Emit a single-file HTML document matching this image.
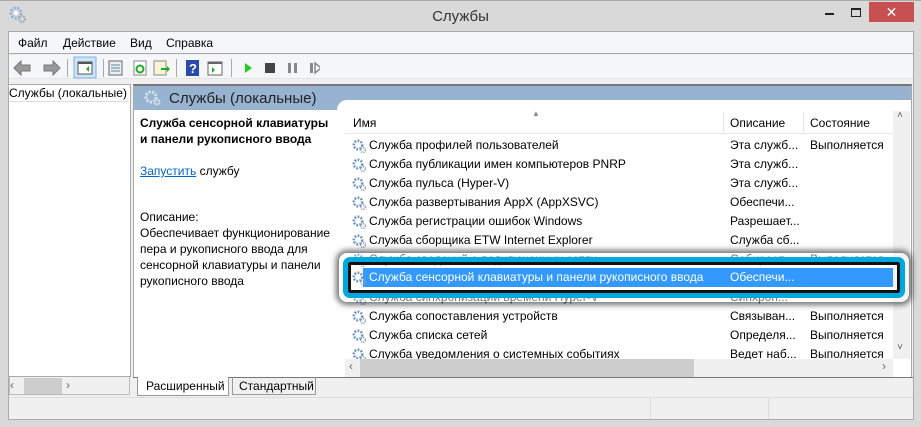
<!DOCTYPE html>
<html><head><meta charset="utf-8"><style>
*{margin:0;padding:0;box-sizing:border-box}
body{width:921px;height:427px;overflow:hidden;background:#d9d9d9;font-family:"Liberation Sans","DejaVu Sans",sans-serif;font-size:12px;color:#000;position:relative}
.a{position:absolute}
.row{position:absolute;left:350px;height:19px;line-height:19px;white-space:nowrap;width:540px}
.row .n{position:absolute;left:19px}
.row .d{position:absolute;left:380px}
.row .s{position:absolute;left:460px}
.g{position:absolute;left:2px;top:3px;width:14px;height:14px}
</style></head><body>
<div class="a" style="left:0;top:0;width:921px;height:1px;background:#aaa"></div>
<svg class="a" style="left:9px;top:6px" width="18" height="18" viewBox="0 0 18 18"><circle cx="7" cy="7" r="5" fill="none" stroke="#8fb0d0" stroke-width="3" stroke-dasharray="2 1.5"/><circle cx="7" cy="7" r="2" fill="#fff"/><circle cx="13" cy="13" r="3" fill="none" stroke="#9ab" stroke-width="2" stroke-dasharray="1.5 1"/></svg>
<div class="a" style="left:0;width:921px;top:8px;text-align:center;font-size:15px;color:#333">Службы</div>
<div class="a" style="left:825px;top:13px;width:9px;height:2px;background:#222"></div>
<div class="a" style="left:851px;top:8px;width:10px;height:9px;border:1px solid #222;border-top-width:2px"></div>
<div class="a" style="left:869px;top:2px;width:45px;height:20px;background:#c75050;color:#fff;text-align:center;font-size:14px;line-height:20px;font-weight:bold">✕</div>
<div class="a" style="left:8px;top:31px;width:906px;height:389px;background:#f0f0f0;border:1px solid #aaa"></div>
<div class="a" style="left:9px;top:32px;width:904px;height:22px;background:#f5f6f7;border-bottom:1px solid #aaa"></div>
<div class="a" style="top:36px;left:18px;font-size:12px">Файл</div>
<div class="a" style="top:36px;left:63px">Действие</div>
<div class="a" style="top:36px;left:130px">Вид</div>
<div class="a" style="top:36px;left:166px">Справка</div>
<div class="a" style="left:9px;top:55px;width:904px;height:24px;background:#f5f6f7;border-bottom:1px solid #e3e3e3"></div>
<svg class="a" style="left:10px;top:56px" width="310" height="24">
<path d="M4 12 L11 5 V9 H20 V15 H11 V19 Z" fill="#999" stroke="#777"/>
<path d="M50 12 L43 5 V9 H34 V15 H43 V19 Z" fill="#999" stroke="#777"/>
<rect x="57" y="3" width="1" height="18" fill="#aaa"/>
<rect x="64" y="1" width="22" height="21" fill="#cce4f7" stroke="#7eb4ea"/>
<rect x="68" y="6" width="14" height="12" fill="#fff" stroke="#555"/><rect x="68" y="6" width="14" height="2" fill="#555"/><path d="M79 10 l-3 3 3 3z" fill="#2a2"/>
<rect x="93" y="3" width="1" height="18" fill="#aaa"/>
<rect x="99" y="5" width="13" height="14" fill="#eee" stroke="#666"/><path d="M101 9h9M101 12h9M101 15h9" stroke="#58a"/>
<rect x="124" y="5" width="12" height="14" fill="#fff" stroke="#888"/><circle cx="130" cy="13" r="3.5" fill="none" stroke="#2a2" stroke-width="2"/>
<rect x="144" y="5" width="12" height="14" fill="#fbf3d5" stroke="#888"/><path d="M151 12h6v-2l3 3-3 3v-2h-6z" fill="#2a2"/>
<rect x="166" y="3" width="1" height="18" fill="#aaa"/>
<rect x="176" y="4" width="13" height="16" fill="#2b4ba8"/><text x="179" y="17" fill="#fff" font-size="13" font-weight="bold" font-family="Liberation Sans">?</text>
<rect x="198" y="6" width="14" height="13" fill="#fff" stroke="#666"/><rect x="198" y="6" width="14" height="2" fill="#666"/><path d="M202 11l3 3-3 3z" fill="#2a2"/>
<rect x="221" y="3" width="1" height="18" fill="#aaa"/>
<path d="M235 7 L242 12 L235 17Z" fill="#2c2"/>
<rect x="255" y="7" width="10" height="10" fill="#444"/>
<rect x="278" y="7" width="3" height="10" fill="#888"/><rect x="284" y="7" width="3" height="10" fill="#888"/>
<rect x="300" y="7" width="3" height="10" fill="#888"/><path d="M305 7 L311 12 L305 17Z" fill="none" stroke="#888" stroke-width="1.5"/>
</svg>
<div class="a" style="left:8px;top:84px;width:123px;height:293px;background:#fff;border:1px solid #aaa"></div>
<div class="a" style="left:9px;top:86px;width:120px;height:16px;border-bottom:1px solid #ddd;font-size:12px;white-space:nowrap">Службы (локальные)</div>
<div class="a" style="left:9px;top:377px;width:121px;height:18px;background:#f0f0f0;border:1px solid #bbb;border-top:0"></div>
<div class="a" style="left:24px;top:378px;width:38px;height:16px;background:#cdcdcd"></div>
<div class="a" style="left:10px;top:378px;color:#666">‹</div><div class="a" style="left:66px;top:378px;color:#666">›</div>
<div class="a" style="left:133px;top:84px;width:779px;height:294px;background:#fff;border:1px solid #aaa;border-top:2px solid #777"></div>
<div class="a" style="left:134px;top:86px;width:777px;height:24px;background:#98b3d0"></div>
<svg class="a" style="left:144px;top:89px" width="18" height="18"><circle cx="7" cy="8" r="5" fill="none" stroke="#d8e6f4" stroke-width="3" stroke-dasharray="2 1.5"/><circle cx="13" cy="13" r="2.5" fill="none" stroke="#c8d6e4" stroke-width="2"/></svg>
<div class="a" style="left:169px;top:90px;font-size:15px;color:#222">Службы (локальные)</div>
<div class="a" style="left:337px;top:100px;width:574px;height:14px;background:#fff;border-radius:10px 0 0 0"></div>
<div class="a" style="left:140px;top:115px;width:195px;font-weight:bold;line-height:16px">Служба сенсорной клавиатуры и панели рукописного ввода</div>
<div class="a" style="left:140px;top:164px"><span style="color:#0066cc;text-decoration:underline">Запустить</span> службу</div>
<div class="a" style="left:140px;top:209px;width:200px;line-height:16px">Описание:<br>Обеспечивает функционирование пера и рукописного ввода для сенсорной клавиатуры и панели рукописного ввода</div>
<div class="a" style="left:345px;top:110px;width:548px;height:24px;border-bottom:1px solid #e5e5e5"></div>
<div class="a" style="left:723px;top:112px;width:1px;height:22px;background:#e5e5e5"></div>
<div class="a" style="left:803px;top:112px;width:1px;height:22px;background:#e5e5e5"></div>
<div class="a" style="left:532px;top:109px;font-size:8px;color:#888">▲</div>
<div class="a" style="left:353px;top:116px">Имя</div>
<div class="a" style="left:730px;top:116px">Описание</div>
<div class="a" style="left:810px;top:116px">Состояние</div>
<div class="a" style="left:893px;top:111px;width:17px;height:248px;background:#f0f0f0"></div>
<div class="a" style="left:897px;top:110px;font-size:10px;color:#555">˄</div>
<div class="a" style="left:897px;top:342px;font-size:10px;color:#555">˅</div>
<div class="row" style="top:136px"><svg class="g"><use href="#gear"/></svg><span class="n">Служба профилей пользователей</span><span class="d">Эта служб...</span><span class="s">Выполняется</span></div>
<div class="row" style="top:155px"><svg class="g"><use href="#gear"/></svg><span class="n">Служба публикации имен компьютеров PNRP</span><span class="d">Эта служб...</span></div>
<div class="row" style="top:174px"><svg class="g"><use href="#gear"/></svg><span class="n">Служба пульса (Hyper-V)</span><span class="d">Эта служб...</span></div>
<div class="row" style="top:193px"><svg class="g"><use href="#gear"/></svg><span class="n">Служба развертывания AppX (AppXSVC)</span><span class="d">Обеспечи...</span></div>
<div class="row" style="top:212px"><svg class="g"><use href="#gear"/></svg><span class="n">Служба регистрации ошибок Windows</span><span class="d">Разрешает...</span></div>
<div class="row" style="top:231px"><svg class="g"><use href="#gear"/></svg><span class="n">Служба сборщика ETW Internet Explorer</span><span class="d">Служба сб...</span></div>
<div class="row" style="top:250px;color:#444"><svg class="g"><use href="#gear"/></svg><span class="n">Служба сведений о подключенных сетях</span><span class="d">Собирает...</span><span class="s">Выполняется</span></div>
<div class="row" style="top:288px;color:#444"><svg class="g"><use href="#gear"/></svg><span class="n">Служба синхронизации времени Hyper-V</span><span class="d">Синхрон...</span></div>
<div class="row" style="top:307px"><svg class="g"><use href="#gear"/></svg><span class="n">Служба сопоставления устройств</span><span class="d">Связыван...</span><span class="s">Выполняется</span></div>
<div class="row" style="top:326px"><svg class="g"><use href="#gear"/></svg><span class="n">Служба списка сетей</span><span class="d">Определя...</span><span class="s">Выполняется</span></div>
<div class="row" style="top:345px;height:14px;overflow:hidden"><svg class="g"><use href="#gear"/></svg><span class="n">Служба уведомления о системных событиях</span><span class="d">Ведет наб...</span><span class="s">Выполняется</span></div>
<div class="a" style="left:339px;top:253px;width:570px;height:49px;border-radius:8px;box-shadow:0 0 6px 3px rgba(0,0,0,.55);background:rgba(255,255,255,.25)"></div>
<div class="a" style="left:343px;top:257px;width:562px;height:41px;border:5px solid #00a8e0;border-radius:7px;box-shadow:inset 0 0 0 3px #111"></div>
<div class="a" style="left:363px;top:268px;width:530px;height:19px;background:#3399ff"></div>
<div class="row" style="top:268px;color:#fff"><svg class="g"><use href="#gear"/></svg><span class="n">Служба сенсорной клавиатуры и панели рукописного ввода</span><span class="d">Обеспечи...</span></div>
<div class="a" style="left:345px;top:359px;width:548px;height:18px;background:#f0f0f0"></div>
<div class="a" style="left:360px;top:359px;width:334px;height:18px;background:#cdcdcd"></div>
<div class="a" style="left:349px;top:359px;color:#666">‹</div><div class="a" style="left:882px;top:359px;color:#666">›</div>
<div class="a" style="left:133px;top:377px;width:780px;height:1px;background:#777"></div>
<div class="a" style="left:137px;top:377px;width:92px;height:19px;background:#fff;border:1px solid #999;border-top:0;padding:2px 0 0 8px;white-space:nowrap">Расширенный</div>
<div class="a" style="left:232px;top:377px;width:84px;height:18px;border:1px solid #999;border-top:0;padding:2px 0 0 6px;white-space:nowrap">Стандартный</div>
<div class="a" style="left:9px;top:397px;width:904px;height:1px;background:#ddd"></div>
<div class="a" style="left:650px;top:398px;width:1px;height:21px;background:#ddd"></div>
<div class="a" style="left:768px;top:398px;width:1px;height:21px;background:#ddd"></div>
<svg width="0" height="0" style="position:absolute"><defs><g id="gear"><circle cx="6" cy="6" r="4.2" fill="none" stroke="#6d93c4" stroke-width="2.6" stroke-dasharray="1.8 1.4"/><circle cx="6" cy="6" r="1.8" fill="#fff"/><circle cx="11" cy="11" r="2.4" fill="none" stroke="#8fa3b8" stroke-width="1.6" stroke-dasharray="1.2 1"/></g></defs></svg>
</body></html>
